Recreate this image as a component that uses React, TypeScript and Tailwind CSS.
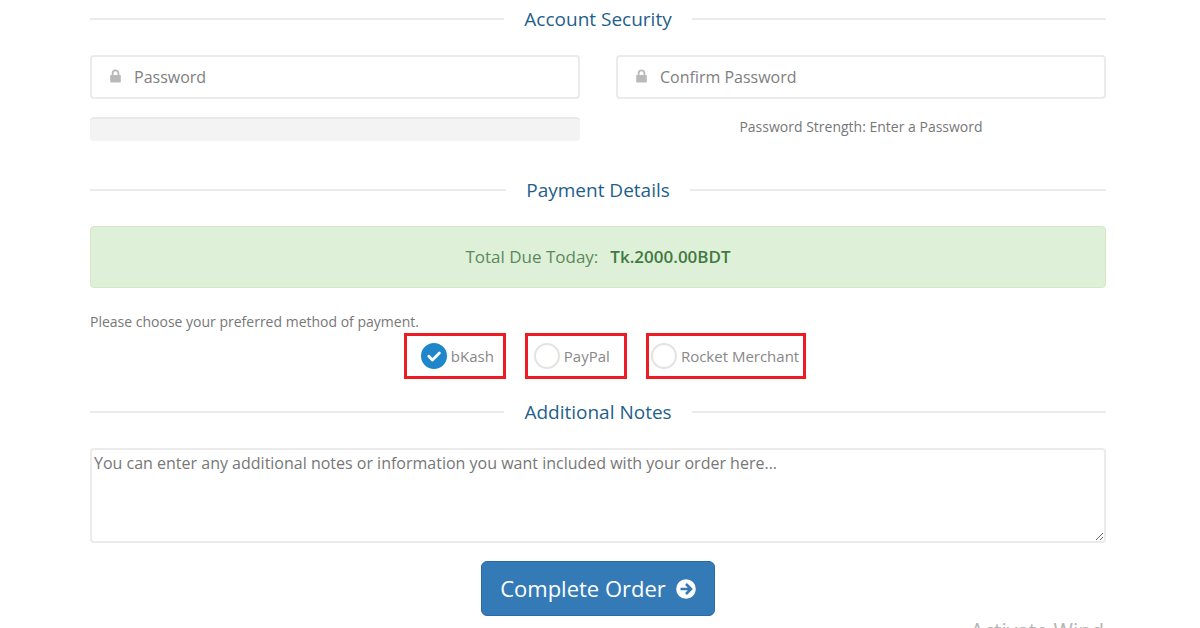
import { useState } from "react";

function SectionHeading({ children }: { children: string }) {
  return (
    <div className="flex items-center gap-5">
      <span className="h-0.5 flex-1 bg-[#ebebeb]" />
      <h2 className="text-[19px] leading-7 text-[#1f5f8b]">{children}</h2>
      <span className="h-0.5 flex-1 bg-[#ebebeb]" />
    </div>
  );
}

function PasswordField({ id, label }: { id: string; label: string }) {
  return (
    <div className="flex h-11 items-center gap-3 rounded-[4px] border-2 border-[#ebebeb] bg-white pl-[18px]">
      <label htmlFor={id} aria-label={label} className="pb-0.5">
        <svg width="12" height="14" viewBox="0 0 12 14" aria-hidden="true">
          <path
            fill="#b9b9b9"
            fillRule="evenodd"
            d="M1 6h.7V4.300a3.800 3.800 0 0 1 7.600 0V6h.7a.8.8 0 0 1 .8.8v5.900a.8.8 0 0 1-.8.8H1a.8.8 0 0 1-.8-.8V6.800A.8.8 0 0 1 1 6Zm2.500 0h4V4.300a2 2 0 0 0-4 0V6Z"
          />
        </svg>
      </label>
      <input
        id={id}
        type="password"
        placeholder={label}
        className="min-w-0 flex-1 bg-transparent text-[16px] leading-5 text-[#666] outline-none placeholder:text-[#808080]"
      />
    </div>
  );
}

const methods = [
  { id: "bkash", name: "bKash", box: "pl-3.5 pr-[9px]" },
  { id: "paypal", name: "PayPal", box: "pl-1.5 pr-3.5" },
  { id: "rocket", name: "Rocket Merchant", box: "pl-0.5 pr-1" },
];

export default function App() {
  const [method, setMethod] = useState("bkash");

  return (
    <div className="relative min-h-screen overflow-hidden bg-white font-['Open_Sans',sans-serif] text-[#777]">
      <form className="pt-[5px] pr-[94px] pl-[90px]" onSubmit={(e) => e.preventDefault()}>
        <section>
          <SectionHeading>Account Security</SectionHeading>
          <div className="mt-[22px] grid grid-cols-2 gap-x-9 gap-y-[18px]">
            <PasswordField id="password" label="Password" />
            <PasswordField id="confirm" label="Confirm Password" />
            <div
              role="progressbar"
              aria-label="Password strength"
              aria-valuenow={0}
              className="h-6 rounded-[4px] border-t-2 border-[#e9e9e9] bg-[#f3f3f3]"
            />
            <p className="text-center text-[14px] leading-5">Password Strength: Enter a Password</p>
          </div>
        </section>

        <section className="mt-[35px]">
          <SectionHeading>Payment Details</SectionHeading>
          <div className="mt-[22px] flex h-[62px] items-center justify-center gap-3 rounded-[4px] border border-[#d3e8c3] bg-[#dff0d8] text-[17px] text-[#5a8a5b]">
            <span>Total Due Today:</span>
            <strong className="font-semibold text-[#3f7a42]">Tk.2000.00BDT</strong>
          </div>
          <fieldset className="mt-6">
            <legend className="text-[14px] leading-5">Please choose your preferred method of payment.</legend>
            <div className="mt-px flex justify-center gap-[19px] pl-3.5">
              {methods.map((m) => (
                <label
                  key={m.id}
                  className={`flex h-[46px] items-center gap-1 border-3 border-[#ed1c24] text-[15px] text-[#888] ${m.box}`}
                >
                  <span className="grid">
                    <input
                      type="radio"
                      name="method"
                      checked={method === m.id}
                      onChange={() => setMethod(m.id)}
                      className="col-start-1 row-start-1 size-[26px] appearance-none rounded-full border-2 border-[#e3e3e0] bg-white checked:border-[#1f87c9] checked:bg-[#1f87c9]"
                    />
                    {method === m.id && (
                      <svg
                        className="pointer-events-none col-start-1 row-start-1"
                        width="26"
                        height="26"
                        viewBox="0 0 26 26"
                        aria-hidden="true"
                      >
                        <path
                          d="m7.800 13.300 3.600 3.600 7-7"
                          fill="none"
                          stroke="#fff"
                          strokeWidth="2.800"
                          strokeLinecap="round"
                          strokeLinejoin="round"
                        />
                      </svg>
                    )}
                  </span>
                  {m.name}
                </label>
              ))}
            </div>
          </fieldset>
        </section>

        <section className="mt-[19px]">
          <SectionHeading>Additional Notes</SectionHeading>
          <textarea
            aria-label="Additional Notes"
            placeholder="You can enter any additional notes or information you want included with your order here..."
            className="mt-[22px] block h-[95px] w-full resize-y rounded-[4px] border-2 border-[#ebebeb] px-0.5 py-[3px] text-[16px] leading-5 text-[#666] outline-none placeholder:text-[#777]"
          />
        </section>

        <div className="mt-[18px] flex justify-center">
          <button
            type="submit"
            className="flex h-[55px] items-center gap-2.5 rounded-[6px] border border-[#2a69a6] bg-[#337ab7] px-[18px] text-[22px] text-white"
          >
            Complete Order
            <svg width="20" height="20" viewBox="0 0 20 20" aria-hidden="true">
              <circle cx="10" cy="10" r="9.800" fill="#fff" />
              <path
                d="M4.500 10h10M10 5l5 5-5 5"
                fill="none"
                stroke="#337ab7"
                strokeWidth="2.600"
              />
            </svg>
          </button>
        </div>
      </form>

      <div className="pointer-events-none absolute right-24 bottom-0 h-[7px] overflow-hidden text-[21px] leading-5 text-[#b5b5b5]">
        Activate Wind
      </div>
    </div>
  );
}
